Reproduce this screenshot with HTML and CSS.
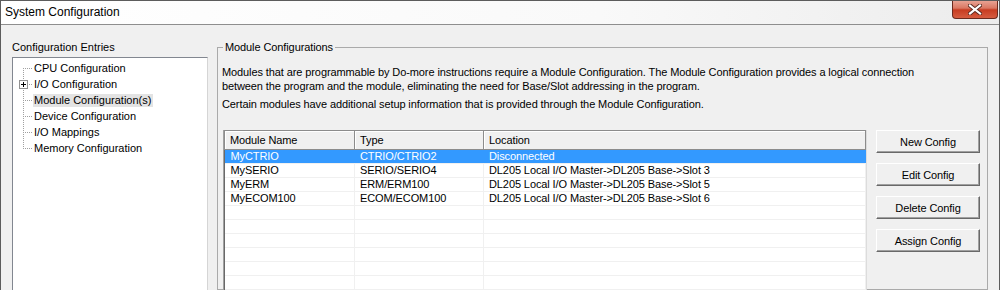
FILE: index.html
```html
<!DOCTYPE html>
<html lang="en">
<head>
    <meta charset="UTF-8">
    <title>System Configuration</title>
    <link rel="stylesheet" href="styles.css">
</head>
<body>
    <div class="window">
        <div class="titlebar">
            <span class="title">System Configuration</span>
            <button class="close-btn" title="Close">
                <svg width="14" height="11" viewBox="0 0 14 11">
                    <path d="M2 1.5 L12 9.5 M12 1.5 L2 9.5" stroke="#5a2a20" stroke-width="4" stroke-linecap="square"/>
                    <path d="M2 1.5 L12 9.5 M12 1.5 L2 9.5" stroke="#ffffff" stroke-width="2.2" stroke-linecap="square"/>
                </svg>
            </button>
        </div>

        <div class="content">
            <div class="entries">
                <div class="entries-label">Configuration Entries</div>
                <div class="tree">
                    <ul class="tree-list">
                        <li><span class="node"></span><span class="label">CPU Configuration</span></li>
                        <li>
                            <span class="node">
                                <svg width="9" height="9" viewBox="0 0 9 9">
                                    <rect x="0.5" y="0.5" width="8" height="8" fill="#fff" stroke="#919191"/>
                                    <path d="M2 4.5 H7 M4.5 2 V7" stroke="#000" stroke-width="1"/>
                                </svg>
                            </span><span class="label">I/O Configuration</span>
                        </li>
                        <li><span class="node"></span><span class="label selected">Module Configuration(s)</span></li>
                        <li><span class="node"></span><span class="label">Device Configuration</span></li>
                        <li><span class="node"></span><span class="label">I/O Mappings</span></li>
                        <li><span class="node"></span><span class="label">Memory Configuration</span></li>
                    </ul>
                </div>
            </div>

            <fieldset class="group">
                <legend>Module Configurations</legend>
                <p class="intro">Modules that are programmable by Do-more instructions require a Module Configuration. The Module Configuration provides a logical connection<br>between the program and the module, eliminating the need for Base/Slot addressing in the program.</p>
                <p class="intro">Certain modules have additional setup information that is provided through the Module Configuration.</p>

                <div class="module-row">
                    <div class="grid">
                        <table class="modules">
                            <thead>
                                <tr>
                                    <th class="c-name">Module Name</th>
                                    <th class="c-type">Type</th>
                                    <th class="c-loc">Location</th>
                                </tr>
                            </thead>
                            <tbody id="module-body"></tbody>
                        </table>
                    </div>
                    <div class="actions">
                        <button class="action">New Config</button>
                        <button class="action">Edit Config</button>
                        <button class="action">Delete Config</button>
                        <button class="action">Assign Config</button>
                    </div>
                </div>
            </fieldset>
        </div>
    </div>

    <script>
        const modules = [
            ['MyCTRIO', 'CTRIO/CTRIO2', 'Disconnected'],
            ['MySERIO', 'SERIO/SERIO4', 'DL205 Local I/O Master->DL205 Base->Slot 3'],
            ['MyERM', 'ERM/ERM100', 'DL205 Local I/O Master->DL205 Base->Slot 5'],
            ['MyECOM100', 'ECOM/ECOM100', 'DL205 Local I/O Master->DL205 Base->Slot 6']
        ];

        const body = document.getElementById('module-body');

        // filled rows plus empty ones so the grid lines run to the bottom
        for (let i = 0; i < 10; i++) {
            const row = document.createElement('tr');
            const data = modules[i] || ['', '', ''];
            if (i === 0) row.classList.add('selected');
            data.forEach(text => {
                const cell = document.createElement('td');
                cell.textContent = text;
                row.appendChild(cell);
            });
            body.appendChild(row);
        }
    </script>
</body>
</html>
```

FILE: styles.css
```css
html, body {
    margin: 0;
    padding: 0;
}
body {
    width: 1000px;
    height: 290px;
    overflow: hidden;
    background-color: #f0f0f0;
    font-family: 'Liberation Sans', Arial, sans-serif;
    font-size: 11px;
    color: #000;
}
.window {
    height: 290px;
    border-top: 1px solid #5c5c5c;
    border-left: 1px solid #5c5c5c;
    border-right: 1px solid #5c5c5c;
    box-sizing: border-box;
    background-color: #f0f0f0;
    overflow: hidden;
}
.titlebar {
    height: 23px;
    display: flex;
    justify-content: space-between;
    align-items: flex-start;
    background: linear-gradient(to right, #ffffff 0%, #f9f9f9 60%, #ececec 100%);
    border-bottom: 1px solid #8e8e8e;
}
.title {
    font-size: 12px;
    line-height: 23px;
    padding-left: 4px;
}
.close-btn {
    width: 46px;
    height: 19px;
    margin-top: -1px;
    margin-right: 1px;
    border: 1px solid #6b2a1e;
    border-top: none;
    border-radius: 0 0 4px 4px;
    background: linear-gradient(to bottom, #eaa899 0%, #da7863 45%, #c73c21 55%, #d65c40 100%);
    display: flex;
    align-items: center;
    justify-content: center;
    padding: 0;
}
.content {
    display: flex;
    gap: 9px;
    padding: 15px 0 0 11px;
}

/* left panel */
.entries {
    width: 196px;
}
.entries-label {
    line-height: 14px;
    margin-bottom: 3px;
}
.tree {
    height: 232px;
    background-color: #fff;
    border: 1px solid #828790;
    border-right-color: #d5d5d5;
    border-bottom: none;
}
.tree-list {
    list-style: none;
    margin: 0;
    padding: 2px 0 0 0;
    background-image: repeating-linear-gradient(to bottom, #a0a0a0 0 1px, transparent 1px 2px);
    background-size: 1px 80px;
    background-position: 10px 10px;
    background-repeat: no-repeat;
}
.tree-list li {
    height: 16px;
    display: flex;
    align-items: center;
    padding-left: 6px;
    background-image: repeating-linear-gradient(to right, #a0a0a0 0 1px, transparent 1px 2px);
    background-size: 11px 1px;
    background-position: 10px 8px;
    background-repeat: no-repeat;
}
.node {
    width: 9px;
    height: 9px;
    margin-right: 5px;
    display: flex;
}
.label {
    padding: 0 2px 0 1px;
    line-height: 13px;
    background-color: #fff;
}
.label.selected {
    background-color: #e3e3e3;
}

/* right group box */
.group {
    margin: 0;
    width: 771px;
    height: 250px;
    box-sizing: border-box;
    border: 1px solid #aaaaaa;
    padding: 0 6px 0 4px;
    letter-spacing: -0.1px;
}
.group legend {
    padding: 0 2px;
    margin-left: 1px;
    line-height: 14px;
}
.intro {
    margin: 0 0 4px 0;
    line-height: 14px;
}
.intro:first-of-type {
    margin-top: 11px;
}
.module-row {
    display: flex;
    gap: 10px;
    margin-top: 19px;
}
.grid {
    width: 644px;
    height: 160px;
    margin-left: 1px;
    box-sizing: border-box;
    background-color: #fff;
    border-left: 1px solid #a0a0a0;
    box-shadow: inset 1px 0 #696969;
    border-right: 1px solid #dcdcdc;
    overflow: hidden;
}
.modules {
    width: 100%;
    border-collapse: collapse;
    table-layout: fixed;
}
.modules th {
    height: 18px;
    padding: 0 0 0 5px;
    text-align: left;
    font-weight: normal;
    background-color: #f0f0f0;
    border: 1px solid #8c8c8c;
    box-shadow: inset 1px 1px #ffffff;
}
.modules th.c-name {
    width: 124px;
}
.modules th.c-type {
    width: 123px;
}
.modules td {
    height: 13px;
    line-height: 13px;
    padding: 0 0 0 5px;
    border-right: 1px solid #f0f0f0;
    border-bottom: 1px solid #f0f0f0;
    white-space: nowrap;
}
.modules tr.selected td {
    background-color: #3399ff;
    color: #fff;
    border-right-color: #3399ff;
}
.modules td:first-child {
    padding-left: 6px;
}
.actions {
    display: flex;
    flex-direction: column;
    gap: 10px;
    margin-left: -1px;
}
.action {
    width: 104px;
    height: 23px;
    font-family: inherit;
    font-size: 11px;
    letter-spacing: -0.1px;
    color: #000;
    background-color: #f0f0f0;
    border: 1px solid;
    border-color: #ffffff #696969 #696969 #ffffff;
    box-shadow: inset -1px -1px #a0a0a0;
    padding: 0;
}
```
